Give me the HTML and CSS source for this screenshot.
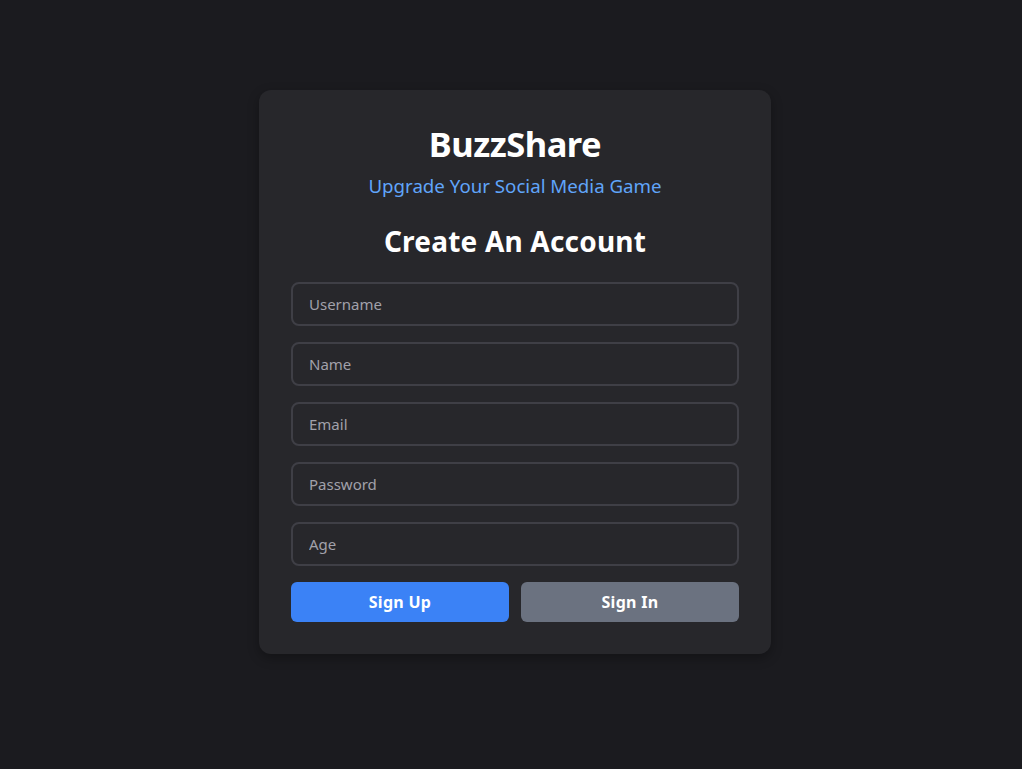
FILE: index.html
```html
<!DOCTYPE html>
<html lang="en">
<head>
<meta charset="utf-8">
<title>BuzzShare - Create An Account</title>
<link rel="stylesheet" href="styles.css">
</head>
<body>
<main class="page">
  <form class="card">
    <h1 class="brand">BuzzShare</h1>
    <p class="tagline">Upgrade Your Social Media Game</p>
    <h2 class="heading">Create An Account</h2>
    <input class="field" type="text" placeholder="Username">
    <input class="field" type="text" placeholder="Name">
    <input class="field" type="email" placeholder="Email">
    <input class="field" type="password" placeholder="Password">
    <input class="field" type="number" placeholder="Age">
    <div class="actions">
      <button class="btn btn-primary" type="button">Sign Up</button>
      <button class="btn btn-secondary" type="button">Sign In</button>
    </div>
  </form>
</main>
</body>
</html>
```

FILE: styles.css
```css
* { box-sizing: border-box; }
html, body { margin: 0; padding: 0; }
body {
  background: #1b1b1f;
  font-family: "Noto Sans", "Open Sans", sans-serif;
  color: #fff;
}
.page {
  min-height: 769px;
  display: flex;
  justify-content: center;
  padding-top: 90px;
  padding-left: 8px;
}
.card {
  width: 512px;
  height: 564px;
  background: #27272b;
  border-radius: 12px;
  padding: 32px;
  display: flex;
  flex-direction: column;
  box-shadow: 0 4px 12px rgba(0,0,0,0.3);
}
.brand {
  margin: 0;
  font-size: 34.5px;
  line-height: 44px;
  font-weight: 700;
  text-align: center;
  letter-spacing: -0.5px;
}
.tagline {
  margin: 6px 0 0;
  font-size: 18.7px;
  line-height: 28px;
  color: #60a5fa;
  text-align: center;
}
.heading {
  margin: 25px 0 25px;
  font-size: 28px;
  line-height: 32px;
  font-weight: 700;
  text-align: center;
  letter-spacing: 0.2px;
}
.field {
  flex: none;
  height: 44px;
  margin-bottom: 16px;
  background: #27272b;
  border: 2px solid #3f3f46;
  border-radius: 8px;
  padding: 0 16px;
  font-family: inherit;
  font-size: 15px;
  color: #fff;
  outline: none;
}
.field::placeholder { color: #a1a1aa; }
.actions {
  display: flex;
  gap: 12px;
}
.btn {
  flex: 1;
  height: 40px;
  border: none;
  border-radius: 6px;
  color: #fff;
  font-family: inherit;
  font-size: 16px;
  font-weight: 700;
  letter-spacing: 0.3px;
}
.btn-primary { background: #3b82f6; }
.btn-secondary { background: #6b7280; }
```
